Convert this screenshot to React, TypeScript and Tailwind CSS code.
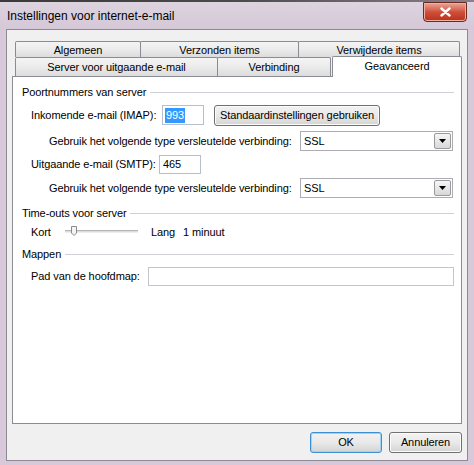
import type { ReactNode } from "react";

// Tab strip of the mail account dialog, two rows
const topTabs = [
  { label: "Algemeen", w: "w-[126px]" },
  { label: "Verzonden items", w: "w-[159px]" },
  { label: "Verwijderde items", w: "w-[162px]" },
];

function Tab({ label, w, first }: { label: string; w: string; first?: boolean }) {
  return (
    <div
      className={`${w} ${first ? "" : "-ml-px"} flex h-full items-center justify-center rounded-t-[2px] border border-b-0 border-[#898c95] bg-gradient-to-b from-[#f4f4f4] via-[#ebebeb] to-[#dcdcdc] pt-px leading-none text-black`}
    >
      {label}
    </div>
  );
}

function GroupHeader({ label }: { label: string }) {
  return (
    <div className="flex h-[14px] items-center">
      <span className="leading-none">{label}</span>
      <div className="ml-[4px] h-px flex-1 bg-[#cfd2d6]" />
    </div>
  );
}

function Combo({ value }: { value: string }) {
  return (
    <div className="flex h-[20px] w-[153px] items-center border border-[#abadb3] bg-white pl-[3px]">
      <span className="flex-1 leading-none">{value}</span>
      <div className="mr-px flex h-[16px] w-[17px] items-center justify-center rounded-[2px] border border-[#9a9a9a] bg-gradient-to-b from-[#f6f6f6] to-[#d8d8d8]">
        <svg width="7" height="4" viewBox="0 0 7 4">
          <path d="M0 0H7L3.5 4Z" fill="#000" />
        </svg>
      </div>
    </div>
  );
}

function Button({ children, w, primary }: { children: ReactNode; w: string; primary?: boolean }) {
  return (
    <div
      className={`${w} flex h-[21px] items-center justify-center rounded-[3px] border ${
        primary ? "border-[#3c8fd0] shadow-[inset_0_0_0_1px_#9fd3f2]" : "border-[#707070] shadow-[inset_0_0_0_1px_#fbfbfb]"
      } bg-gradient-to-b from-[#f2f2f2] via-[#e9e9e9] to-[#d4d4d4] leading-none text-black`}
    >
      {children}
    </div>
  );
}

export default function App() {
  return (
    <div className="relative flex h-[465px] w-[474px] flex-col overflow-hidden bg-[#d8c9da] font-['Liberation_Sans',Arial,sans-serif] text-[11px] tracking-[-0.1px] text-black">
      {/* window frame top */}
      <div className="h-[2px] bg-gradient-to-r from-[#3a3a3a] via-[#4b4b4b] to-[#8a7f8c]" />
      <div className="flex h-[27px] items-center bg-gradient-to-b from-[#ddd4df] to-[#d5c7d7] pl-[7px] pt-px text-[12px] tracking-normal">
        Instellingen voor internet-e-mail
      </div>
      <div className="absolute right-[7px] top-[2px] flex h-[20px] w-[44px] items-center justify-center rounded-b-[4px] border border-[#6b2a20] bg-gradient-to-b from-[#e9a597] via-[#cf4f3a] to-[#b9301c] shadow-[inset_0_0_0_1px_#f0b0a0]">
        <svg width="11" height="10" viewBox="0 0 11 10">
          <path d="M1.5 1.5L9.5 8.5M9.5 1.5L1.5 8.5" stroke="#fff" strokeWidth="2.4" strokeLinecap="round" />
        </svg>
      </div>

      {/* client area */}
      <div className="ml-[6px] flex h-[432px] w-[462px] flex-col border border-[#8f8a91] bg-[#f0f0f0] px-[5px] pt-[11px] pb-[7px]">
        <div className="ml-[3px] flex h-[16px]">
          {topTabs.map((t, i) => (
            <Tab key={t.label} label={t.label} w={t.w} first={i === 0} />
          ))}
        </div>
        <div className="relative z-10 -mt-px ml-[3px] flex h-[20px] items-end">
          <div className="flex h-[19px]">
            <Tab label="Server voor uitgaande e-mail" w="w-[203px]" first />
            <Tab label="Verbinding" w="w-[114px]" />
          </div>
          <div className="-mb-px ml-px flex h-[21px] w-[132px] items-start justify-center rounded-t-[2px] border border-b-0 border-[#898c95] bg-white pt-[4px] leading-none">
            Geavanceerd
          </div>
        </div>

        {/* tab panel */}
        <div className="flex h-[348px] flex-col border border-[#898c95] bg-white pl-[9px] pr-[7px]">
          <div className="mt-[8px]">
            <GroupHeader label="Poortnummers van server" />
          </div>

          <div className="ml-[9px] mt-[6px] flex h-[20px] items-center">
            <span className="w-[131px] leading-none">Inkomende e-mail (IMAP):</span>
            <div className="flex h-[20px] w-[42px] items-center border border-[#b5c0cb] bg-white pl-[2px]">
              <span className="bg-[#3399ff] px-px py-[2px] leading-none text-white">993</span>
            </div>
            <div className="ml-[10px]">
              <Button w="w-[166px]">Standaardinstellingen gebruiken</Button>
            </div>
          </div>

          <div className="ml-[27px] mt-[6px] flex h-[20px] items-center">
            <span className="w-[251px] leading-none">Gebruik het volgende type versleutelde verbinding:</span>
            <Combo value="SSL" />
          </div>

          <div className="ml-[9px] mt-[3px] flex h-[20px] items-center">
            <span className="w-[128px] leading-none">Uitgaande e-mail (SMTP):</span>
            <div className="flex h-[19px] w-[42px] items-center border border-[#b5c0cb] bg-white pl-[3px] leading-none">
              465
            </div>
          </div>

          <div className="ml-[27px] mt-[4px] flex h-[20px] items-center">
            <span className="w-[251px] leading-none">Gebruik het volgende type versleutelde verbinding:</span>
            <Combo value="SSL" />
          </div>

          <div className="mt-[8px]">
            <GroupHeader label="Time-outs voor server" />
          </div>

          <div className="ml-[9px] mt-[4px] flex h-[16px] items-center">
            <span className="w-[34px] leading-none">Kort</span>
            {/* slider */}
            <div className="relative h-[16px] w-[73px]">
              <div className="absolute left-0 right-0 top-[6px] h-[3px] border-y border-t-[#b5b5b5] border-b-[#eeeeee] bg-[#dcdcdc]" />
              <svg className="absolute left-[5px] top-[1px]" width="8" height="12" viewBox="0 0 8 12">
                <path d="M1.5 1.5H6.5V8L4 10.5L1.5 8Z" fill="#f4f4f4" stroke="#8b8b8b" />
              </svg>
            </div>
            <span className="ml-[13px] w-[32px] leading-none">Lang</span>
            <span className="leading-none">1 minuut</span>
          </div>

          <div className="mt-[7px]">
            <GroupHeader label="Mappen" />
          </div>

          <div className="ml-[9px] mt-[6px] flex h-[19px] items-center">
            <span className="w-[117px] leading-none">Pad van de hoofdmap:</span>
            <div className="h-[19px] flex-1 border border-[#c2c6cc] bg-white" />
          </div>
        </div>

        <div className="mt-[8px] flex justify-end gap-[7px]">
          <Button w="w-[72px]" primary>
            OK
          </Button>
          <Button w="w-[73px]">Annuleren</Button>
        </div>
      </div>
    </div>
  );
}
